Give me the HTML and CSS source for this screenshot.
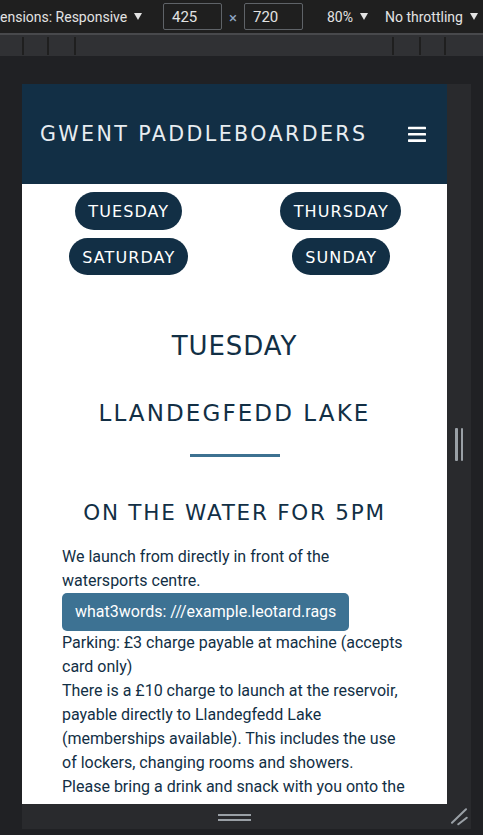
FILE: index.html
```html
<!DOCTYPE html>
<html lang="en">
<head>
<meta charset="utf-8">
<title>Gwent Paddleboarders</title>
<link rel="stylesheet" href="styles.css">
</head>
<body>
<div class="toolbar">
  <span class="tb-dim">ensions: Responsive<span class="caret"></span></span>
  <span class="tb-input">425</span>
  <span class="tb-x">×</span>
  <span class="tb-input">720</span>
  <span class="tb-zoom">80%<span class="caret"></span></span>
  <span class="tb-throttle">No throttling<span class="caret"></span></span>
</div>
<div class="ruler">
  <span class="div d1"></span><span class="div d2"></span><span class="div d3"></span>
  <span class="div d4"></span><span class="div d5"></span><span class="div d6"></span>
</div>
<div class="stage">
  <div class="device">
    <div class="page">
      <header class="site-header">
        <span class="brand">GWENT PADDLEBOARDERS</span>
        <svg class="burger" width="18" height="16" viewBox="0 0 18 16" aria-hidden="true">
          <rect x="0" y="0.7" width="18" height="2.6" rx="0.6" fill="#ffffff"/>
          <rect x="0" y="7" width="18" height="2.6" rx="0.6" fill="#ffffff"/>
          <rect x="0" y="13.3" width="18" height="2.6" rx="0.6" fill="#ffffff"/>
        </svg>
      </header>
      <nav class="days">
        <div class="day-cell"><a class="day-btn">TUESDAY</a></div>
        <div class="day-cell"><a class="day-btn">THURSDAY</a></div>
        <div class="day-cell"><a class="day-btn">SATURDAY</a></div>
        <div class="day-cell"><a class="day-btn">SUNDAY</a></div>
      </nav>
      <main class="content">
        <h2 class="day-title">TUESDAY</h2>
        <h3 class="venue">LLANDEGFEDD LAKE</h3>
        <div class="rule"></div>
        <h4 class="time">ON THE WATER FOR 5PM</h4>
        <div class="info">
          <p>We launch from directly in front of the watersports centre.</p>
          <a class="w3w">what3words: ///example.leotard.rags</a>
          <p>Parking: £3 charge payable at machine (accepts card only)</p>
          <p>There is a £10 charge to launch at the reservoir, payable directly to Llandegfedd Lake (memberships available). This includes the use of lockers, changing rooms and showers.</p>
          <p>Please bring a drink and snack with you onto the</p>
        </div>
      </main>
    </div>
    <div class="vhandle"><span></span><span></span></div>
    <div class="bottombar">
      <div class="hhandle-area"><div class="hhandle"><span></span><span></span></div></div>
      <div class="grip-area">
        <svg width="18" height="18" viewBox="0 0 18 18" aria-hidden="true">
          <line x1="2" y1="14.7" x2="16" y2="1.3" stroke="#9aa0a6" stroke-width="2" stroke-linecap="round"/>
          <line x1="8.3" y1="16.3" x2="16.7" y2="9.7" stroke="#9aa0a6" stroke-width="2" stroke-linecap="round"/>
        </svg>
      </div>
    </div>
  </div>
</div>
</body>
</html>
```

FILE: styles.css
```css
* { box-sizing: border-box; }
html, body { margin: 0; padding: 0; }
body {
  width: 483px;
  height: 835px;
  overflow: hidden;
  background: #202124;
  font-family: Roboto, "Noto Sans", sans-serif;
}

/* DevTools toolbar */
.toolbar {
  height: 33px;
  display: flex;
  align-items: center;
  background: #1f1f1f;
  color: #e3e3e3;
  font-size: 14px;
  white-space: nowrap;
  overflow: hidden;
}
.tb-dim { width: 163px; display: flex; align-items: center; }
.caret {
  display: inline-block;
  width: 0;
  height: 0;
  border-left: 4px solid transparent;
  border-right: 4px solid transparent;
  border-top: 7px solid #e3e3e3;
  margin-left: 7px;
}
.tb-input {
  width: 59px;
  height: 27px;
  border: 1px solid #5f6368;
  border-radius: 2px;
  padding-left: 8px;
  display: flex;
  align-items: center;
  font-size: 15px;
}
.tb-x { width: 22px; text-align: center; color: #8fa6c4; font-size: 15px; padding-top: 3px; }
.tb-zoom { margin-left: 24px; width: 58px; display: flex; align-items: center; }
.tb-throttle { display: flex; align-items: center; }

.ruler {
  height: 23px;
  border-top: 2px solid #48494c;
  background: #303134;
  display: flex;
  align-items: center;
}
.ruler .div { width: 2px; height: 18px; background: #1f1f1f; }
.d1 { margin-left: 22px; }
.d2 { margin-left: 23px; }
.d3 { margin-left: 25px; }
.d4 { margin-left: 316px; }
.d5 { margin-left: 25px; }
.d6 { margin-left: 23px; }

.stage { padding: 28px 0 0 22px; }
.device {
  display: grid;
  grid-template-columns: 425px 24px;
  grid-template-rows: 720px 25px;
}
.page {
  background: #ffffff;
  overflow: hidden;
  color: #122f45;
}
.vhandle {
  background: #292a2d;
  display: flex;
  justify-content: center;
  align-items: center;
  gap: 3px;
}
.vhandle span { width: 2.4px; height: 33px; background: #9aa0a6; border-radius: 1px; }
.bottombar {
  grid-column: 1 / 3;
  background: #292a2d;
  display: flex;
}
.hhandle-area {
  width: 425px;
  display: flex;
  justify-content: center;
  align-items: center;
}
.hhandle { display: flex; flex-direction: column; gap: 3px; padding-top: 1px; }
.hhandle span { width: 33px; height: 2px; background: #9aa0a6; }
.grip-area { padding: 4px 0 0 3px; }
.grip-area svg { display: block; }

/* Site */
.site-header {
  height: 100px;
  background: #122f45;
  display: flex;
  align-items: center;
  justify-content: space-between;
  padding: 0 21px 0 18px;
}
.brand {
  font-family: "DejaVu Sans", sans-serif;
  font-size: 20.6px;
  line-height: 25px;
  letter-spacing: 2.4px;
  color: #e8edf1;
}
.burger { display: block; }

.days {
  margin-top: 8px;
  display: grid;
  grid-template-columns: 1fr 1fr;
  row-gap: 8px;
}
.day-cell { display: flex; justify-content: center; }
.day-btn {
  display: block;
  background: #122f45;
  color: #ffffff;
  font-family: "DejaVu Sans", sans-serif;
  font-size: 16px;
  letter-spacing: 1.1px;
  line-height: 25px;
  padding: 7px 12.5px 5.5px 13.5px;
  border-radius: 19px;
}

.content { padding: 0 40px; text-align: center; }
.day-title, .venue, .time {
  font-family: "DejaVu Sans", sans-serif;
  font-weight: normal;
  margin: 0;
}
.day-title { font-size: 26px; line-height: 32px; letter-spacing: 0.9px; margin-top: 54.5px; }
.venue { font-size: 23px; line-height: 28px; letter-spacing: 2.1px; margin-top: 37px; }
.rule { width: 90px; height: 3px; background: #3d7191; margin: 27px auto 0; }
.time { font-size: 21.5px; line-height: 26px; letter-spacing: 1.75px; margin-top: 43px; }

.info {
  text-align: left;
  margin-top: 19.5px;
  font-size: 16px;
  line-height: 24px;
}
.info p { margin: 0; }
.w3w {
  display: block;
  width: fit-content;
  background: #3d7293;
  color: #ffffff;
  padding: 7px 13px;
  border-radius: 5px;
}
```
